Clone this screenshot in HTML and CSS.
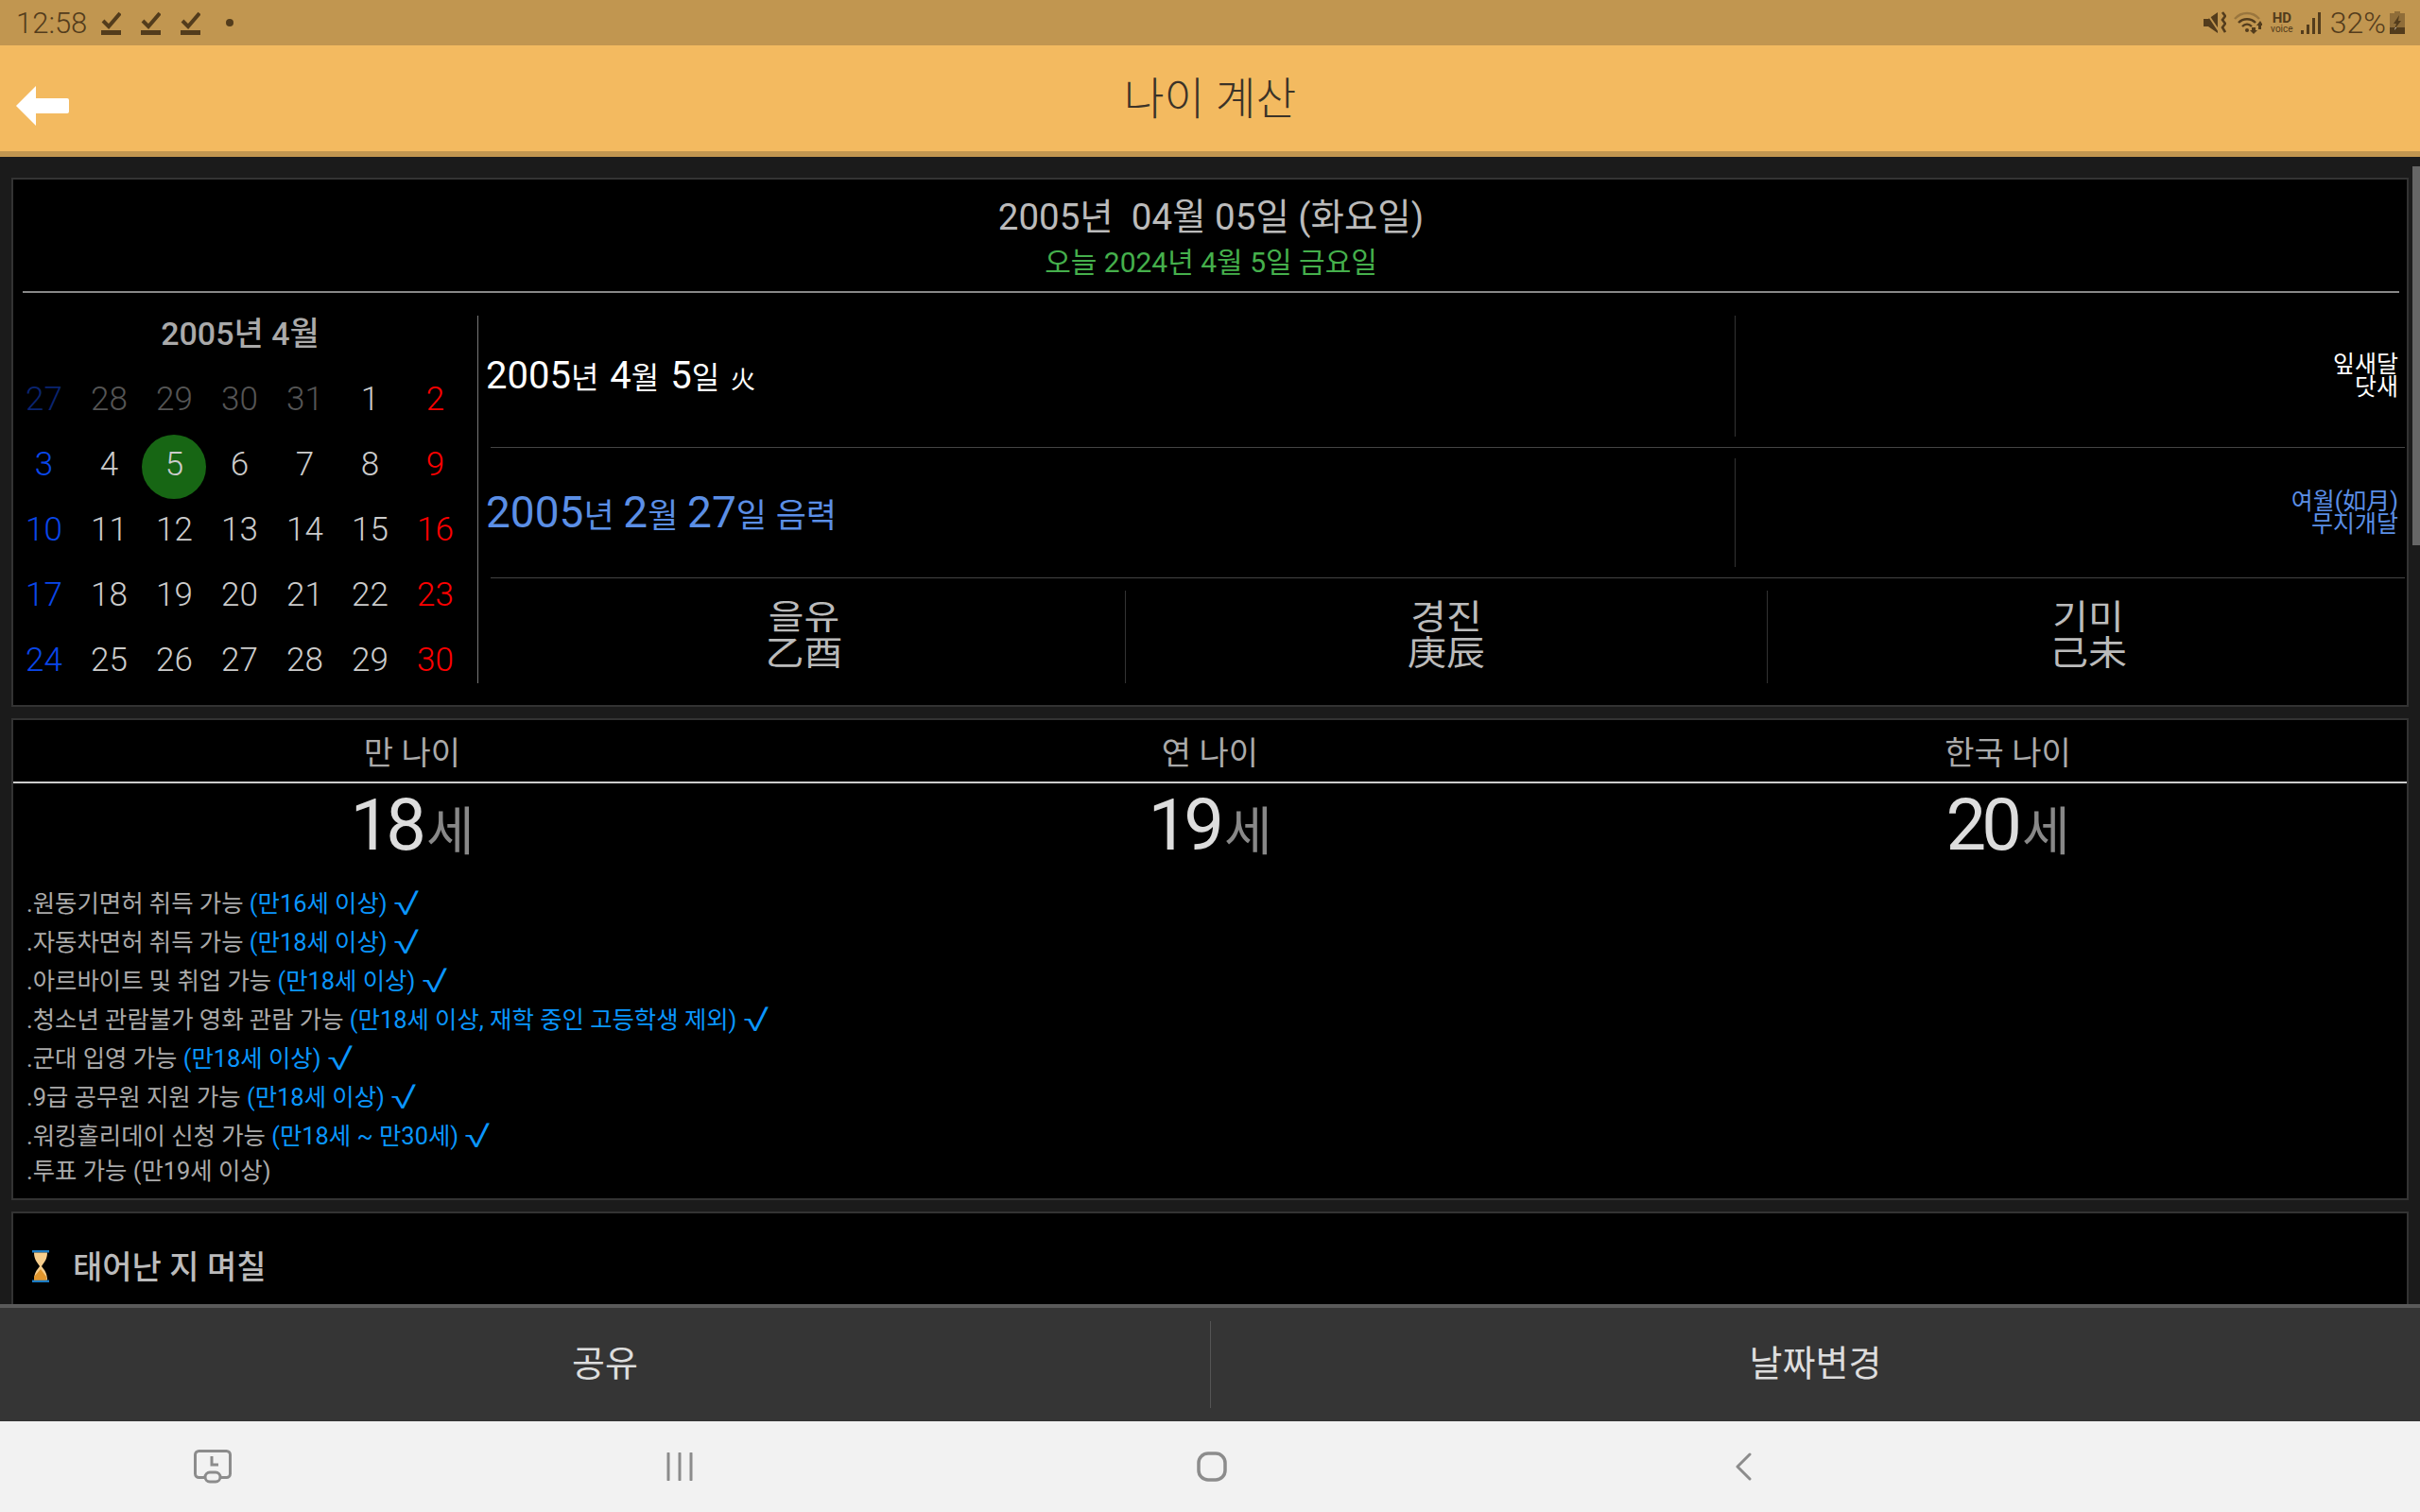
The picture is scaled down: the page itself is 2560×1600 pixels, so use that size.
FILE: index.html
```html
<!DOCTYPE html>
<html lang="ko">
<head>
    <meta charset="utf-8">
    <title>나이 계산</title>
    <link rel="stylesheet" href="styles.css">
</head>
<body>
<div class="app">
    <div class="status-bar">
        <div class="status-left">
            <span class="time">12:58</span>
            <svg class="check" viewBox="0 0 21 26"><path d="M2 11l6 6L20 3" fill="none" stroke="#533c1c" stroke-width="4"/><rect y="21" width="21" height="5" fill="#533c1c"/></svg>
            <svg class="check" viewBox="0 0 21 26"><path d="M2 11l6 6L20 3" fill="none" stroke="#533c1c" stroke-width="4"/><rect y="21" width="21" height="5" fill="#533c1c"/></svg>
            <svg class="check" viewBox="0 0 21 26"><path d="M2 11l6 6L20 3" fill="none" stroke="#533c1c" stroke-width="4"/><rect y="21" width="21" height="5" fill="#533c1c"/></svg>
            <span class="dot"></span>
        </div>
        <div class="status-right">
            <svg class="ico-mute" viewBox="0 0 24 24"><path d="M0 8h5l10-7v22L5 16H0z" fill="#533c1c"/><path d="M3 1l14 21" fill="none" stroke="#c19650" stroke-width="2"/><path d="M20 1l3 4-3 4 3 4-3 4 3 5" fill="none" stroke="#533c1c" stroke-width="2.6"/></svg>
            <svg class="ico-wifi" viewBox="0 0 30 24"><path d="M1 8c7-8 19-8 26 0" fill="none" stroke="#533c1c" stroke-opacity=".35" stroke-width="2.4"/><path d="M5 12c5-5 13-5 18 0M9 16c3-3 7-3 10 0" fill="none" stroke="#533c1c" stroke-width="2.4"/><circle cx="14" cy="20" r="2" fill="#533c1c"/><path d="M19 17h4v3h2l-4 4-4-4h2zM24 15l4-5 3 5h-2v4h-3v-4z" fill="#533c1c"/></svg>
            <div class="hd"><b>HD</b><span>voice</span></div>
            <svg class="ico-signal" viewBox="0 0 21 23"><path d="M0 19h3v4H0zM6 13h3v10H6zM12 6h3v17h-3zM18 0h3v23h-3z" fill="#533c1c"/></svg>
            <span class="battery-pct">32%</span>
            <svg class="ico-battery" viewBox="0 0 16 24"><path d="M5 0h6v2h5v22H0V2h5z" fill="#533c1c" fill-opacity=".45"/><rect y="17" width="16" height="7" fill="#533c1c"/><path d="M10 4L4 13h3l-2 6 7-9H9z" fill="#533c1c"/><path d="M6 17l-1 3 2-3z" fill="#fff"/></svg>
        </div>
    </div>

    <div class="header">
        <svg class="back" viewBox="0 0 56 42"><path d="M21 0v13h33a2 2 0 0 1 2 2v12a2 2 0 0 1-2 2H21v13L0 21z" fill="#fff"/></svg>
        <div class="header-title">나이 계산</div>
    </div>

    <div class="content">
        <div class="scrollbar"></div>

        <div class="card">
            <div class="day-head">
                <div class="day-title">2005년&nbsp; 04월 05일 (화요일)</div>
                <div class="day-today">오늘 2024년 4월 5일 금요일</div>
            </div>
            <div class="day-body">
                <div class="calendar">
                    <div class="cal-title">2005년 4월</div>
                    <div class="cal-grid">
                        <span class="sun dim">27</span><span class="dim">28</span><span class="dim">29</span><span class="dim">30</span><span class="dim">31</span><span>1</span><span class="sat">2</span>
                        <span class="sun">3</span><span>4</span><span class="today">5</span><span>6</span><span>7</span><span>8</span><span class="sat">9</span>
                        <span class="sun">10</span><span>11</span><span>12</span><span>13</span><span>14</span><span>15</span><span class="sat">16</span>
                        <span class="sun">17</span><span>18</span><span>19</span><span>20</span><span>21</span><span>22</span><span class="sat">23</span>
                        <span class="sun">24</span><span>25</span><span>26</span><span>27</span><span>28</span><span>29</span><span class="sat">30</span>
                    </div>
                </div>
                <div class="date-panel">
                    <div class="date-row solar">
                        <div class="date-text"><b>2005</b>년 <b>4</b>월 <b>5</b>일 <small>火</small></div>
                        <div class="moon">잎새달<br>닷새</div>
                    </div>
                    <div class="rule"></div>
                    <div class="date-row lunar">
                        <div class="date-text"><b>2005</b>년 <b>2</b>월 <b>27</b>일 음력</div>
                        <div class="moon">여월(如月)<br>무지개달</div>
                    </div>
                    <div class="rule"></div>
                    <div class="ganji">
                        <div><p>을유<br>乙酉</p></div>
                        <div><p>경진<br>庚辰</p></div>
                        <div><p>기미<br>己未</p></div>
                    </div>
                </div>
            </div>
        </div>

        <div class="card">
            <div class="age-tabs">
                <div>만 나이</div>
                <div>연 나이</div>
                <div>한국 나이</div>
            </div>
            <div class="age-nums">
                <div>18<span>세</span></div>
                <div>19<span>세</span></div>
                <div>20<span>세</span></div>
            </div>
            <ul class="rights">
                <li>.원동기면허 취득 가능 <em>(만16세 이상) <i>√</i></em></li>
                <li>.자동차면허 취득 가능 <em>(만18세 이상) <i>√</i></em></li>
                <li>.아르바이트 및 취업 가능 <em>(만18세 이상) <i>√</i></em></li>
                <li>.청소년 관람불가 영화 관람 가능 <em>(만18세 이상, 재학 중인 고등학생 제외) <i>√</i></em></li>
                <li>.군대 입영 가능 <em>(만18세 이상) <i>√</i></em></li>
                <li>.9급 공무원 지원 가능 <em>(만18세 이상) <i>√</i></em></li>
                <li>.워킹홀리데이 신청 가능 <em>(만18세 ~ 만30세) <i>√</i></em></li>
                <li class="last">.투표 가능 (만19세 이상)</li>
            </ul>
        </div>

        <div class="card days-card">
            <svg class="hourglass" viewBox="0 0 18 34">
                <rect width="18" height="2.5" fill="#1c7cc4"/>
                <rect y="31.5" width="18" height="2.5" fill="#1c7cc4"/>
                <path d="M2 2.5h14c0 7-3 10-6 14.500 3 4 6 7 6 14.500H2c0-7.500 3-10.500 6-14.500C5 12.500 2 9.500 2 2.500z" fill="#f6cd8c"/>
                <path d="M9 20l6 8v3.500H2V28z" fill="#e0952c"/>
            </svg>
            <span>태어난 지 며칠</span>
        </div>
    </div>

    <div class="actions">
        <div>공유</div>
        <div>날짜변경</div>
    </div>

    <div class="nav">
        <svg class="nav-recent" viewBox="0 0 40 36"><rect x="1.500" y="1.500" width="37" height="28" rx="4" fill="none" stroke="#8c8c8c" stroke-width="3"/><path d="M19 7v9h7" fill="none" stroke="#8c8c8c" stroke-width="3"/><rect x="12" y="24" width="16" height="10" rx="5" fill="#f2f2f2" stroke="#8c8c8c" stroke-width="3"/></svg>
        <svg class="nav-lines" viewBox="0 0 28 30"><path d="M2 1v28M14 1v28M26 1v28" stroke="#8c8c8c" stroke-width="3" stroke-linecap="round"/></svg>
        <svg class="nav-home" viewBox="0 0 32 32"><rect x="2" y="2" width="28" height="28" rx="10" fill="none" stroke="#8c8c8c" stroke-width="3.500"/></svg>
        <svg class="nav-back" viewBox="0 0 18 30"><path d="M16 2L3 15l13 13" fill="none" stroke="#8c8c8c" stroke-width="3" stroke-linecap="round" stroke-linejoin="round"/></svg>
    </div>
</div>
</body>
</html>
```

FILE: styles.css
```css
* {
    box-sizing: border-box;
}
body {
    margin: 0;
    background-color: #000;
    font-family: Roboto, "Noto Sans CJK KR", sans-serif;
    color: #bbb;
}
.app {
    width: 2560px;
    height: 1600px;
    display: flex;
    flex-direction: column;
    overflow: hidden;
}

/* status bar */
.status-bar {
    height: 48px;
    flex: none;
    background-color: #c19650;
    color: #533c1c;
    display: flex;
    justify-content: space-between;
    align-items: center;
    padding: 0 16px 0 17px;
}
.status-left, .status-right {
    display: flex;
    align-items: center;
}
.time {
    font-size: 31px;
    font-weight: 300;
    margin-right: 15px;
}
.check {
    width: 21px;
    height: 26px;
    margin-right: 21px;
}
.dot {
    width: 8px;
    height: 8px;
    border-radius: 50%;
    background-color: #533c1c;
    margin-left: 6px;
}
.ico-mute {
    width: 24px;
    height: 24px;
    margin-right: 8px;
}
.ico-wifi {
    width: 30px;
    height: 24px;
    margin-right: 8px;
}
.hd {
    display: flex;
    flex-direction: column;
    align-items: center;
    width: 26px;
    margin-right: 7px;
    line-height: 10px;
}
.hd b {
    font-size: 15px;
    line-height: 13px;
}
.hd span {
    font-size: 10px;
}
.ico-signal {
    width: 21px;
    height: 23px;
    margin-right: 10px;
}
.battery-pct {
    font-size: 32px;
    font-weight: 300;
    margin-right: 4px;
}
.ico-battery {
    width: 16px;
    height: 24px;
}

/* title bar */
.header {
    height: 118px;
    flex: none;
    background-color: #f3ba60;
    border-bottom: 6px solid #c19650;
    display: flex;
    align-items: center;
    justify-content: center;
    position: relative;
}
.back {
    width: 56px;
    height: 42px;
    position: absolute;
    left: 17px;
    top: 43px;
}
.header-title {
    font-size: 46.500px;
    font-weight: 300;
    color: #3b3328;
    margin-top: -8px;
}

/* scrolling area */
.content {
    flex: 1;
    min-height: 0;
    background-color: #1b1b1b;
    padding: 22px 12px 0;
    position: relative;
    overflow: hidden;
}
.scrollbar {
    position: absolute;
    right: 0;
    top: 10px;
    width: 8px;
    height: 401px;
    background-color: #666;
}
.card {
    background-color: #000;
    border: 2px solid #333;
    margin-bottom: 12px;
}

/* date card */
.day-head {
    height: 120px;
    margin: 0 8px 0 10px;
    padding-top: 16px;
    border-bottom: 2px solid #888;
    text-align: center;
}
.day-title {
    font-size: 38.500px;
    line-height: 48px;
}
.day-today {
    font-size: 30px;
    line-height: 38px;
    margin-top: 5px;
    color: #45b04c;
}
.day-body {
    display: flex;
    padding: 24px 0 23px;
    height: 436px;
}
.calendar {
    width: 491px;
    flex: none;
    margin-top: -3px;
}
.cal-title {
    font-size: 34px;
    line-height: 44px;
    text-align: center;
    color: #aaa;
    font-weight: 500;
    padding-right: 11px;
}
.cal-grid {
    display: grid;
    grid-template-columns: repeat(7, 69px);
    grid-auto-rows: 69px;
    margin: 13px 0 0 -2px;
    font-size: 35px;
    font-weight: 300;
    color: #ccc;
}
.cal-grid span {
    display: flex;
    align-items: center;
    justify-content: center;
    position: relative;
}
.cal-grid .dim {
    color: #555;
}
.cal-grid .sun {
    color: #0a47ea;
}
.cal-grid .sun.dim {
    color: #0a2470;
}
.cal-grid .sat {
    color: #f00;
}
.cal-grid .today {
    z-index: 0;
}
.cal-grid .today::before {
    content: "";
    position: absolute;
    z-index: -1;
    left: 0;
    top: 3px;
    width: 68px;
    height: 68px;
    border-radius: 50%;
    background-color: #176614;
}
.date-panel {
    flex: 1;
    border-left: 1px solid #777;
}
.date-row {
    display: flex;
    padding-left: 8px;
    height: 128px;
    align-items: center;
}
.date-row.lunar {
    height: 115px;
    margin: 11px 0;
}
.date-text {
    flex: 1;
    margin-top: -2px;
}
.solar {
    color: #fff;
}
.solar .date-text {
    font-size: 32px;
    word-spacing: 4px;
}
.solar b {
    font-size: 40px;
    font-weight: 400;
}
.solar small {
    font-size: 26px;
}
.lunar {
    color: #5b8fe6;
}
.lunar .date-text {
    font-size: 35px;
    word-spacing: 1px;
}
.lunar b {
    font-size: 46px;
    font-weight: 400;
}
.moon {
    width: 713px;
    height: 100%;
    flex: none;
    border-left: 1px solid #333;
    padding-right: 11px;
    font-size: 25px;
    line-height: 24px;
    text-align: right;
    display: flex;
    align-items: center;
    justify-content: flex-end;
}
.rule {
    height: 1px;
    margin: 11px 4px 0 13px;
    background-color: #444;
}
.ganji {
    display: grid;
    grid-template-columns: repeat(3, 679px);
    margin: 13px 0 0 5px;
    height: 98px;
    text-align: center;
}
.ganji div {
    display: flex;
    align-items: center;
    justify-content: center;
}
.ganji p {
    margin: -3px 0 0;
    font-size: 41px;
    line-height: 43px;
    transform: scaleY(.88);
}
.ganji div + div {
    border-left: 1px solid #333;
}

/* age card */
.age-tabs, .age-nums {
    display: grid;
    grid-template-columns: repeat(3, 1fr);
    text-align: center;
}
.age-tabs {
    height: 67px;
    padding-top: 3px;
    border-bottom: 2px solid #ccc;
    font-size: 34px;
    line-height: 64px;
    color: #aaa;
}
.age-nums {
    font-size: 76px;
    letter-spacing: -5px;
    line-height: 88px;
    color: #ddd;
}
.age-nums span {
    font-size: 55px;
    letter-spacing: 0;
    margin-left: 5px;
    color: #888;
}
.rights {
    list-style: none;
    margin: 12px 0 0;
    padding: 0 0 0 14px;
    font-size: 25.400px;
    line-height: 41px;
    height: 332px;
    color: #aaa;
}
.rights em {
    font-style: normal;
    color: #0a96ff;
}
.rights i {
    display: inline-block;
    font-style: normal;
    font-size: 36px;
    font-weight: 300;
    line-height: 0;
    vertical-align: -3px;
    transform: scaleX(1.45);
    transform-origin: left center;
}
.rights .last {
    line-height: 33px;
}

/* days card */
.days-card {
    display: flex;
    align-items: flex-start;
    gap: 25px;
    padding: 37px 0 0 20px;
    height: 140px;
    font-size: 34px;
    line-height: 40px;
    font-weight: 500;
}
.hourglass {
    width: 18px;
    height: 34px;
    margin-top: 2px;
}

/* bottom buttons */
.actions {
    height: 124px;
    flex: none;
    background-color: #353535;
    border-top: 4px solid #5a5a5a;
    display: grid;
    grid-template-columns: 1fr 1fr;
    font-size: 38px;
    color: #ddd;
    text-align: center;
    align-items: center;
}
.actions div {
    height: 92px;
    line-height: 91px;
}
.actions div + div {
    border-left: 1px solid #555;
}

/* android nav bar */
.nav {
    height: 96px;
    flex: none;
    background-color: #f2f2f2;
    display: grid;
    grid-template-columns: 450px 538px 588px 536px;
    align-items: center;
    justify-items: center;
}
.nav-recent {
    width: 40px;
    height: 36px;
}
.nav-lines {
    width: 28px;
    height: 30px;
}
.nav-home {
    width: 32px;
    height: 32px;
}
.nav-back {
    width: 18px;
    height: 30px;
}
```
